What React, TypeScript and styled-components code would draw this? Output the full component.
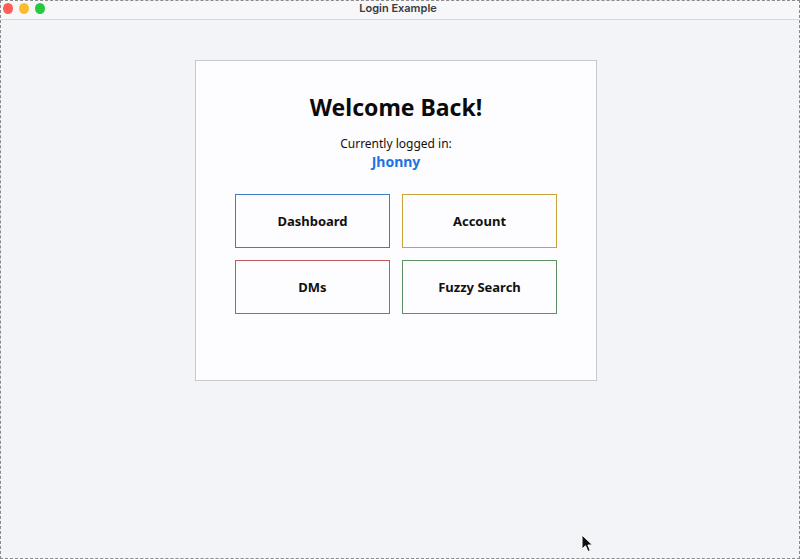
import styled, { createGlobalStyle } from "styled-components";

const GlobalStyle = createGlobalStyle`
  html, body {
    margin: 0;
    padding: 0;
  }
  body {
    font-family: "Noto Sans", "DejaVu Sans", sans-serif;
  }
`;

const tiles = [
  { label: "Dashboard", color: "#3f7cc4" },
  { label: "Account", color: "#c9a43c" },
  { label: "DMs", color: "#c0595c" },
  { label: "Fuzzy Search", color: "#5c9161" },
];

function App() {
  return (
    <>
      <GlobalStyle />
      <Window>
        <TitleBar>
          <Lights>
            <Light color="#fe5f57" />
            <Light color="#febc2e" />
            <Light color="#28c840" />
          </Lights>
          <WindowTitle>Login Example</WindowTitle>
        </TitleBar>
        <Content>
          <Card>
            <Heading>Welcome Back!</Heading>
            <Sub>Currently logged in:</Sub>
            <User>Jhonny</User>
            <Grid>
              {tiles.map((t) => (
                <Tile key={t.label} color={t.color}>
                  {t.label}
                </Tile>
              ))}
            </Grid>
          </Card>
        </Content>
        <Cursor width="14" height="20" viewBox="0 0 14 20">
          <path
            d="M1 1 L1 15 L4.5 11.8 L7 17.5 L9.3 16.5 L6.9 11 L11.5 11 Z"
            fill="#111"
            stroke="#fff"
            strokeWidth="1"
          />
        </Cursor>
      </Window>
    </>
  );
}

export default App;

const Window = styled.div`
  position: relative;
  width: 800px;
  height: 559px;
  box-sizing: border-box;
  border: 1px dashed #8a8a8a;
  background: #f3f4f7;
  display: flex;
  flex-direction: column;
  overflow: hidden;
`;

const TitleBar = styled.div`
  height: 18px;
  flex: none;
  position: relative;
  display: flex;
  align-items: flex-start;
  justify-content: center;
  background: #f7f6f9;
  border-bottom: 1px solid #d8d6da;
`;

const Lights = styled.div`
  position: absolute;
  left: 2px;
  top: 2px;
  display: flex;
  gap: 6px;
`;

const Light = styled.span<{ color: string }>`
  width: 10px;
  height: 11px;
  border-radius: 50%;
  background: ${(p) => p.color};
`;

const WindowTitle = styled.div`
  font-family: "Inter", "Liberation Sans", sans-serif;
  font-weight: 600;
  font-size: 11px;
  line-height: 14px;
  color: #3b3b3f;
  margin-left: -4px;
`;

const Content = styled.div`
  flex: 1;
  display: flex;
  justify-content: center;
  padding-top: 40px;
  padding-right: 8px;
`;

const Card = styled.div`
  width: 400px;
  height: 319px;
  box-sizing: content-box;
  background: #fdfcfe;
  border: 1px solid #c9c8cc;
  display: flex;
  flex-direction: column;
  align-items: center;
`;

const Heading = styled.h1`
  margin: 31px 0 0;
  font-size: 23px;
  font-weight: bold;
  color: #0b0b0b;
  line-height: 31px;
`;

const Sub = styled.div`
  margin-top: 12px;
  font-size: 12px;
  color: #111;
  line-height: 17px;
`;

const User = styled.div`
  margin-top: 0;
  font-size: 14px;
  font-weight: bold;
  color: #1f73e0;
  line-height: 20px;
`;

const Grid = styled.div`
  margin-top: 22px;
  display: grid;
  grid-template-columns: repeat(2, 155px);
  grid-auto-rows: 54px;
  gap: 12px 12px;
`;

const Tile = styled.div<{ color: string }>`
  box-sizing: border-box;
  border: 1px solid ${(p) => p.color};
  display: flex;
  align-items: center;
  justify-content: center;
  font-size: 13px;
  font-weight: bold;
  color: #111;
`;

const Cursor = styled.svg`
  position: absolute;
  left: 580px;
  top: 533px;
`;
